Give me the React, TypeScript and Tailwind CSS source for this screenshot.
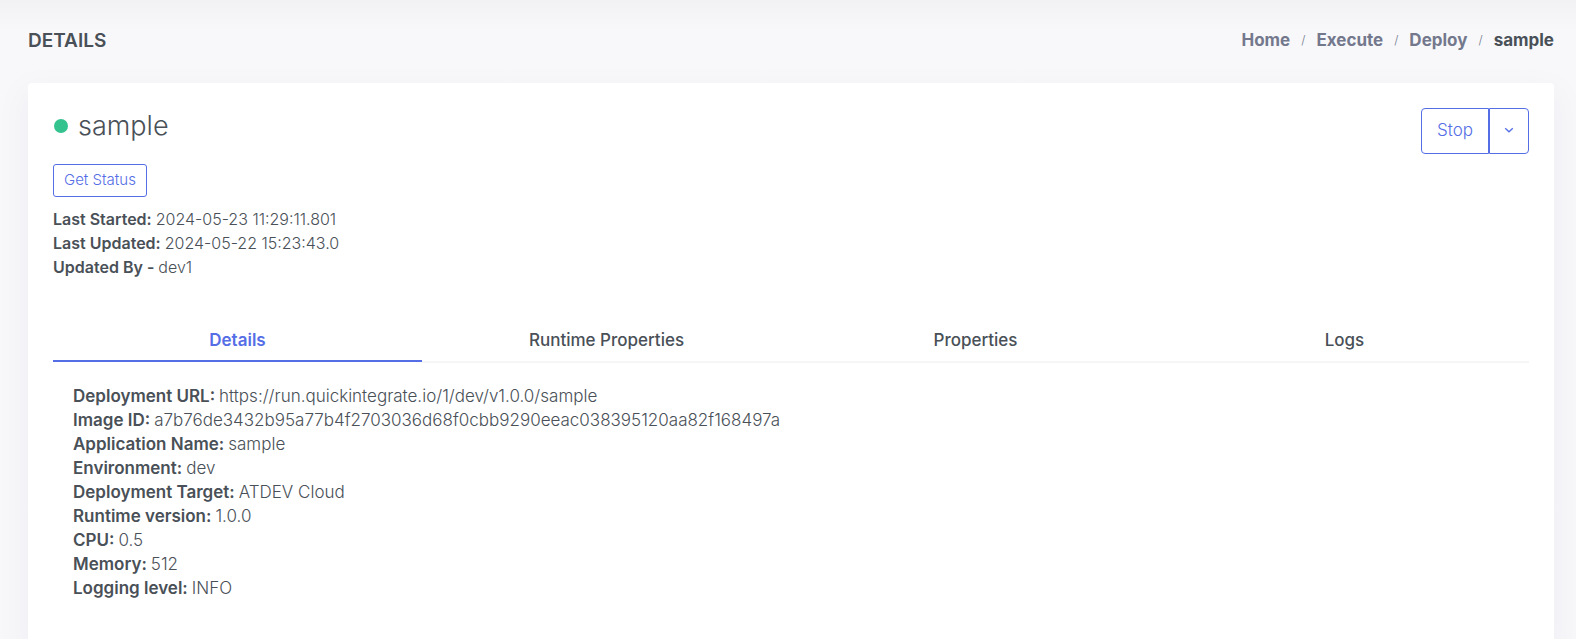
import { useState } from 'react';

const crumbs = ['Home', 'Execute', 'Deploy'];

const summary = [
  ['Last Started:', '2024-05-23 11:29:11.801'],
  ['Last Updated:', '2024-05-22 15:23:43.0'],
  ['Updated By -', 'dev1'],
];

const tabs = ['Details', 'Runtime Properties', 'Properties', 'Logs'];

const details = [
  ['Deployment URL:', 'https://run.quickintegrate.io/1/dev/v1.0.0/sample'],
  ['Image ID:', 'a7b76de3432b95a77b4f2703036d68f0cbb9290eeac038395120aa82f168497a'],
  ['Application Name:', 'sample'],
  ['Environment:', 'dev'],
  ['Deployment Target:', 'ATDEV Cloud'],
  ['Runtime version:', '1.0.0'],
  ['CPU:', '0.5'],
  ['Memory:', '512'],
  ['Logging level:', 'INFO'],
];

function Fields({ rows }: { rows: string[][] }) {
  return (
    <dl className="leading-6">
      {rows.map(([label, value]) => (
        <div key={label} className="flex flex-wrap gap-x-1">
          <dt className="font-semibold">{label}</dt>
          <dd className="min-w-0 font-light break-all">{value}</dd>
        </div>
      ))}
    </dl>
  );
}

export default function App() {
  const [active, setActive] = useState('Details');

  return (
    <div className="flex min-h-screen flex-col bg-[#f8f8fb] bg-linear-to-b from-[#f2f2f5] to-[#f8f8fb] to-[32px] pr-[22px] pl-7 font-['Inter',sans-serif] text-[#495057]">
      <header className="flex h-[83px] items-center justify-between">
        <h1 className="text-[19px] font-semibold">DETAILS</h1>
        <nav aria-label="Breadcrumb" className="pb-1">
          <ol className="flex items-center gap-[11px] text-[17px] leading-6 font-bold">
            {crumbs.map((crumb) => (
              <li key={crumb} className="flex items-center gap-[11px] text-[#74788d]">
                <a href="#">{crumb}</a>
                <span className="text-xs font-light">/</span>
              </li>
            ))}
            <li aria-current="page">sample</li>
          </ol>
        </nav>
      </header>

      <main className="grow rounded-t-[4px] bg-white px-[25px] pt-[25px] pb-8 shadow-[0_12px_32px_8px_rgba(18,38,63,0.03)]">
        <div className="flex items-start justify-between">
          <div className="text-base">
            <h2 className="flex h-9 items-center gap-2.5 pl-px text-[27px] font-light">
              <span className="size-3.5 rounded-full bg-[#34c38f]" />
              sample
            </h2>
            <button
              type="button"
              className="mt-5 mb-2.5 h-[33px] rounded-[3px] border border-[#556ee6] px-2.5 text-[15px] font-light text-[#556ee6]"
            >
              Get Status
            </button>
            <Fields rows={summary} />
          </div>
          <div className="flex h-[46px] text-[#556ee6]">
            <button type="button" className="rounded-l-[4px] border border-[#556ee6] px-[15px] text-[17px] font-light">
              Stop
            </button>
            <button
              type="button"
              aria-label="More actions"
              className="flex w-10 items-center justify-center rounded-r-[4px] border border-[#556ee6] pb-0.5"
            >
              <svg width="10" height="10" viewBox="0 0 10 10" fill="none" stroke="currentColor" strokeWidth="1.3">
                <path d="M1.2 3.2 5 6.8 8.8 3.2" />
              </svg>
            </button>
          </div>
        </div>

        <div role="tablist" className="mt-[43px] grid grid-cols-4 items-start text-[17px]">
          {tabs.map((tab) => (
            <button
              key={tab}
              type="button"
              role="tab"
              aria-selected={active === tab}
              onClick={() => setActive(tab)}
              className={
                active === tab
                  ? 'h-10 border-b-2 border-[#556ee6] font-semibold text-[#556ee6]'
                  : 'h-[41px] border-b-2 border-[#f6f6f6] pb-px font-medium'
              }
            >
              {tab}
            </button>
          ))}
        </div>

        <section role="tabpanel" aria-label={active} className="px-5 pt-[21px] text-[17px]">
          {active === 'Details' && <Fields rows={details} />}
        </section>
      </main>
    </div>
  );
}
